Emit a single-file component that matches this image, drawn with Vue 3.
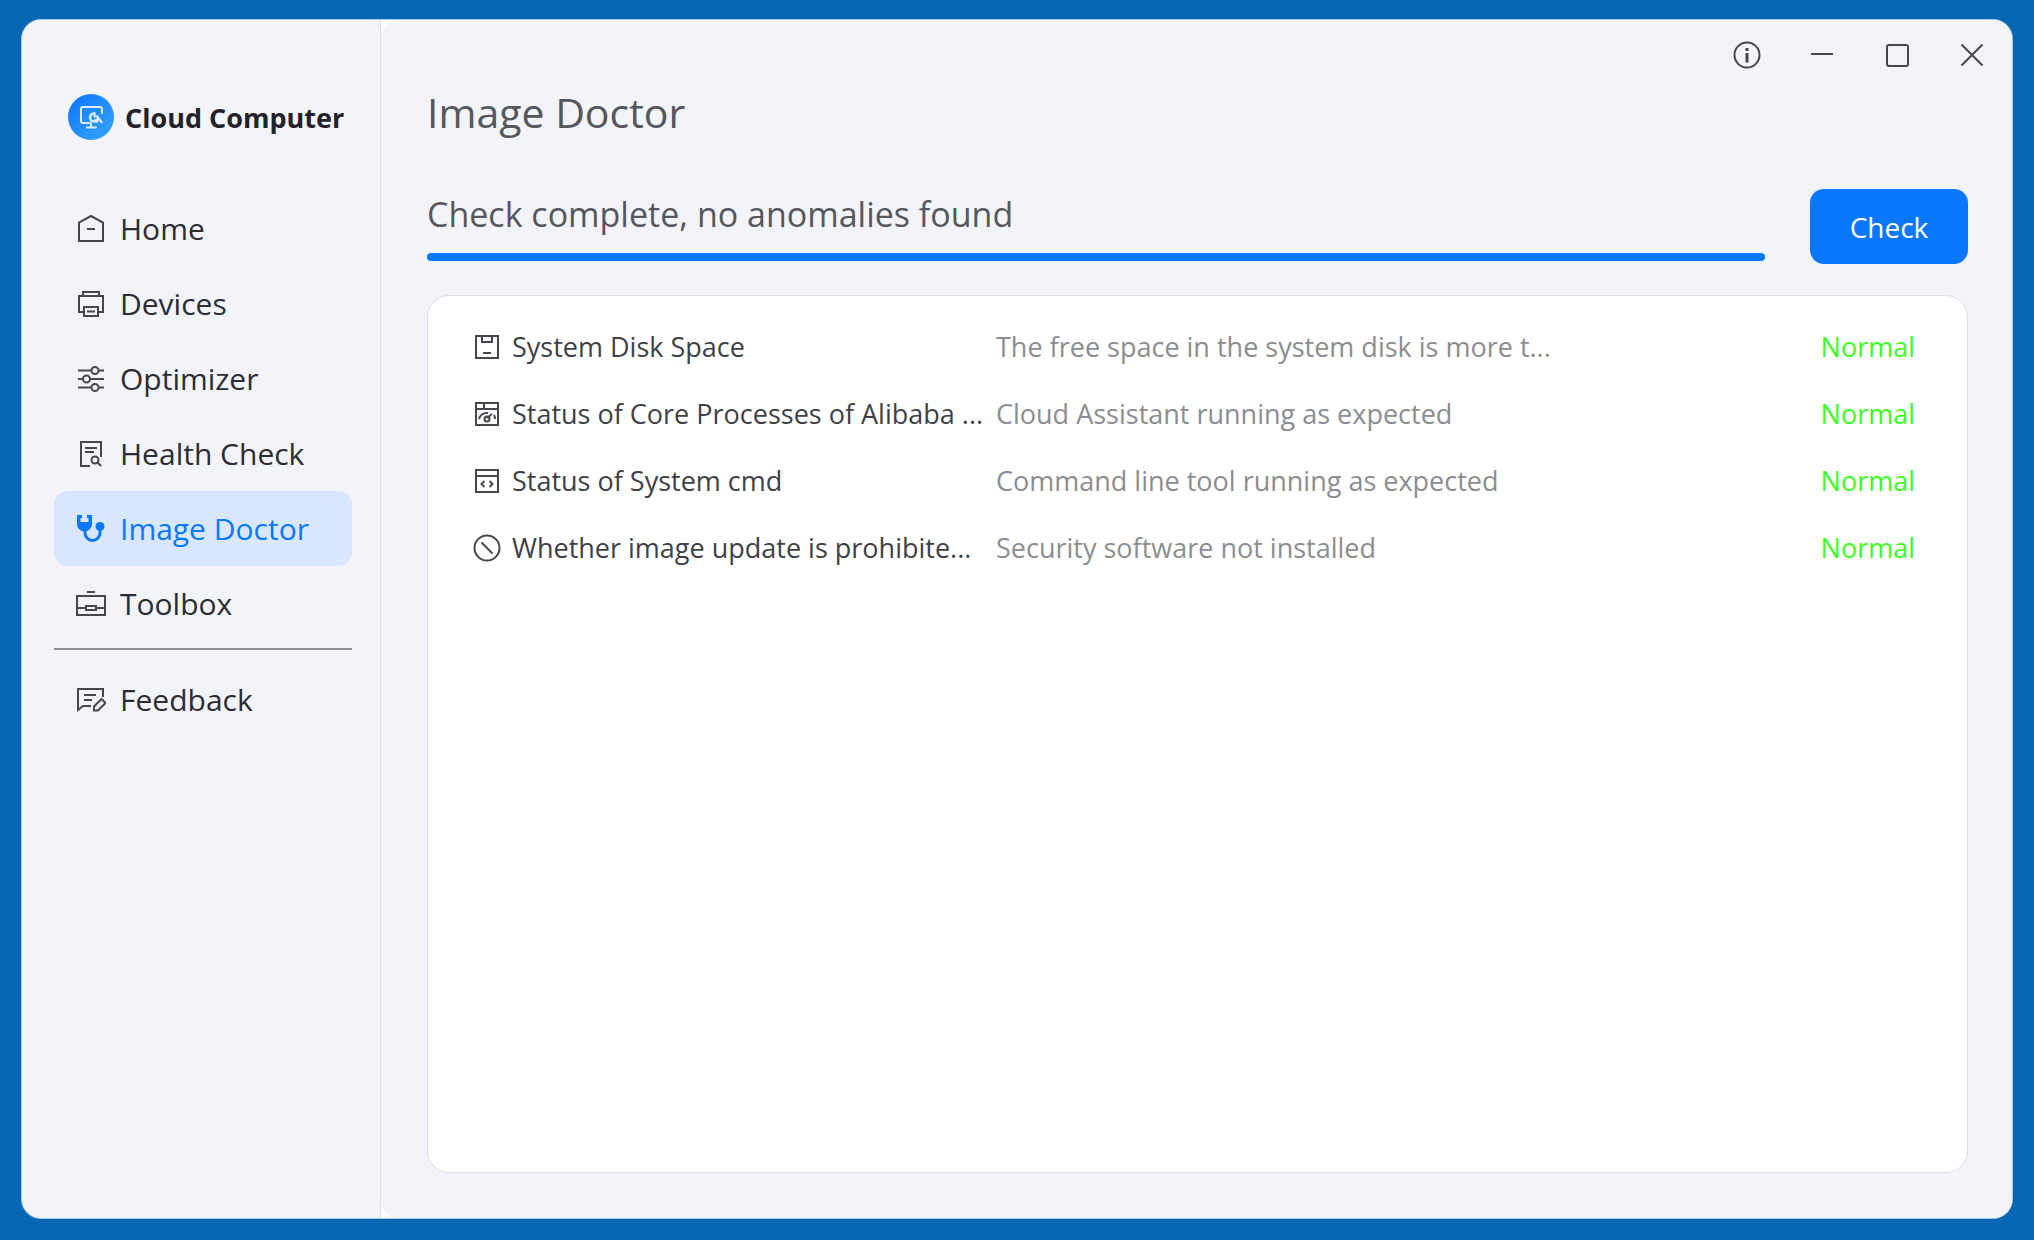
<script setup>
import { ref } from 'vue'

const active = ref('doctor')
const progress = ref(100)

const menu = [
  { id: 'home', label: 'Home' },
  { id: 'devices', label: 'Devices' },
  { id: 'optimizer', label: 'Optimizer' },
  { id: 'health', label: 'Health Check' },
  { id: 'doctor', label: 'Image Doctor' },
  { id: 'toolbox', label: 'Toolbox' },
  { id: 'feedback', label: 'Feedback' }
]

const checks = [
  {
    id: 'disk',
    name: 'System Disk Space',
    detail: 'The free space in the system disk is more t...',
    status: 'Normal'
  },
  {
    id: 'process',
    name: 'Status of Core Processes of Alibaba ...',
    detail: 'Cloud Assistant running as expected',
    status: 'Normal'
  },
  {
    id: 'cmd',
    name: 'Status of System cmd',
    detail: 'Command line tool running as expected',
    status: 'Normal'
  },
  {
    id: 'prohibit',
    name: 'Whether image update is prohibite...',
    detail: 'Security software not installed',
    status: 'Normal'
  }
]
</script>

<template>
  <div class="desktop">
    <div class="window">
      <aside class="sidebar">
        <div class="brand">
          <svg class="logo" viewBox="0 0 46 46" aria-hidden="true">
            <defs>
              <linearGradient id="logo-fill" x1="0" y1="0" x2="1" y2="1">
                <stop offset="0" stop-color="#0a74ff" />
                <stop offset="1" stop-color="#38a8ff" />
              </linearGradient>
            </defs>
            <circle cx="23" cy="23" r="23" fill="url(#logo-fill)" />
            <g fill="none" stroke="#dcecff" stroke-width="2" stroke-linecap="round">
              <path d="M22 29h-7a2 2 0 0 1-2-2V15a2 2 0 0 1 2-2h17a2 2 0 0 1 2 2v4" />
              <path d="M19 33.500h9M23 29.500v4" />
              <path d="M26.500 19.500a4 4 0 1 0 3.500 4.500l3.500 4" stroke-width="2.500" />
              <path d="M26.500 19.500v3h3M29 28l-2-2" />
            </g>
          </svg>
          <span>Cloud Computer</span>
        </div>

        <nav class="menu">
          <template v-for="item in menu" :key="item.id">
            <hr v-if="item.id === 'feedback'" class="divider" />
            <button
              type="button"
              class="menu-item"
              :class="{ active: active === item.id }"
              @click="active = item.id"
            >
              <svg class="icon" viewBox="0 0 30 30" aria-hidden="true">
                <template v-if="item.id === 'home'">
                  <path d="M3 27V8.500L15 2l12 6.500V27z" />
                  <path d="M11 15h8" />
                </template>
                <template v-else-if="item.id === 'devices'">
                  <path d="M7 7V3h16v4" />
                  <path d="M7 23H3V7h24v16h-4" />
                  <path d="M8 18h14v9H8z" />
                  <path d="M11 22.500h8" />
                </template>
                <template v-else-if="item.id === 'optimizer'">
                  <path d="M2 6.500h13.500M22.500 6.500H28M2 15h5M14 15h14M2 23.500h13.500M22.500 23.500H28" />
                  <circle cx="19" cy="6.500" r="3.500" />
                  <circle cx="10.500" cy="15" r="3.500" />
                  <circle cx="19" cy="23.500" r="3.500" />
                </template>
                <template v-else-if="item.id === 'health'">
                  <path d="M14 27H5V3h20v15" />
                  <path d="M9 9h12M9 13h9" />
                  <circle cx="19" cy="21" r="3.500" />
                  <path d="M21.500 23.500L25 27" />
                </template>
                <template v-else-if="item.id === 'doctor'">
                  <path class="solid" d="M1 1h5v3H4.500v4h8V4H11V1h5v9a7.500 7.500 0 0 1-15 0z" />
                  <circle class="solid" cx="24" cy="12.500" r="4.500" />
                  <path class="tube" d="M9 16v3a7.500 7.500 0 0 0 15 0v-5" />
                </template>
                <template v-else-if="item.id === 'toolbox'">
                  <path d="M1 7h28v19H1zM11 3h8" />
                  <path d="M1 19h9M20 19h9M10 17h10v4H10z" />
                </template>
                <template v-else>
                  <path d="M27 12V4H2v21l5-4h8" />
                  <path d="M8 10h12M8 15h8" />
                  <path d="M18 21.500l7.500-7.500 4 4-7.500 7.500h-4z" />
                </template>
              </svg>
              <span>{{ item.label }}</span>
            </button>
          </template>
        </nav>
      </aside>

      <div class="content">
        <main class="page">
          <div class="titlebar">
            <button type="button" aria-label="About">
              <svg viewBox="0 0 28 28" aria-hidden="true">
                <circle cx="14" cy="14" r="12.500" />
                <path class="info" d="M14 7v3M14 12v9.500" />
              </svg>
            </button>
            <button type="button" aria-label="Minimize">
              <svg viewBox="0 0 28 28" aria-hidden="true"><path d="M3 13h22" /></svg>
            </button>
            <button type="button" aria-label="Maximize">
              <svg viewBox="0 0 28 28" aria-hidden="true">
                <rect x="4" y="4" width="21" height="21" rx="2" />
              </svg>
            </button>
            <button type="button" aria-label="Close">
              <svg viewBox="0 0 28 28" aria-hidden="true">
                <path d="M3.500 3.500l21 21M24.500 3.500l-21 21" />
              </svg>
            </button>
          </div>

          <div class="body">
            <h1>Image Doctor</h1>

            <div class="summary">
              <div class="result">
                <p id="result-text">Check complete, no anomalies found</p>
                <div
                  class="track"
                  role="progressbar"
                  aria-labelledby="result-text"
                  :aria-valuenow="progress"
                >
                  <div class="bar" :style="{ width: progress + '%' }"></div>
                </div>
              </div>
              <button type="button" class="check">Check</button>
            </div>

            <section class="card">
              <table>
                <tbody>
                  <tr v-for="check in checks" :key="check.id">
                    <td class="mark">
                      <svg class="icon" viewBox="0 0 28 28" aria-hidden="true">
                        <template v-if="check.id === 'disk'">
                          <path d="M3 3h22v22H3z" />
                          <path d="M9 3v6h10V3M10 20h8" />
                        </template>
                        <template v-else-if="check.id === 'process'">
                          <path d="M3 3h22v22H3zM3 9h22M11 3v6" />
                          <path d="M6 19a8 8 0 0 1 9-6M19 14l-5 4M21 15a8 8 0 0 1 1 4" />
                          <circle cx="14" cy="19" r="2.500" />
                        </template>
                        <template v-else-if="check.id === 'cmd'">
                          <path d="M3 3h22v22H3zM3 9h22" />
                          <path d="M11.500 14l-3 3 3 3M16.500 14l3 3-3 3" />
                        </template>
                        <template v-else>
                          <circle cx="14" cy="14" r="12.500" />
                          <path d="M8.500 8.500l11 11" />
                        </template>
                      </svg>
                    </td>
                    <td class="name">{{ check.name }}</td>
                    <td class="detail">{{ check.detail }}</td>
                    <td class="status">{{ check.status }}</td>
                  </tr>
                </tbody>
              </table>
            </section>
          </div>
        </main>
      </div>
    </div>
  </div>
</template>

<style>
body {
  margin: 0;
  background: #0667b3;
}
</style>

<style scoped>
* {
  box-sizing: border-box;
}

.desktop {
  min-height: 100vh;
  padding: 19px 21px 21px;
  display: flex;
  background: #0667b3;
  color: #2b2d33;
  font-family: 'Open Sans', 'Noto Sans', sans-serif;
  font-size: 27px;
}

.window {
  flex: 1;
  display: flex;
  overflow: hidden;
  border: 1px solid #a9c9e4;
  border-radius: 20px;
  background: #f3f4f9;
}

button {
  border: none;
  background: none;
  color: inherit;
  font: inherit;
  cursor: pointer;
}

svg {
  display: block;
  fill: none;
  stroke: #45474c;
  stroke-width: 2;
}

.sidebar {
  width: 359px;
  flex: none;
  padding: 74px 28px 0 32px;
  border-right: 1px solid #dfe0e4;
}

.brand {
  display: flex;
  align-items: center;
  gap: 11px;
  height: 46px;
  padding-left: 14px;
  color: #222228;
  font-weight: 700;
  white-space: nowrap;
}

.logo {
  width: 46px;
  height: 46px;
  flex: none;
  stroke: none;
}

.menu {
  display: flex;
  flex-direction: column;
  margin-top: 51px;
}

.menu-item {
  display: flex;
  align-items: center;
  gap: 14px;
  height: 75px;
  padding: 0 22px;
  border-radius: 14px;
  font-size: 30px;
  white-space: nowrap;
}

.icon {
  width: 30px;
  height: 30px;
  flex: none;
}

.active {
  background: #d8e7fe;
  color: #0a77ff;
}

.active .icon {
  stroke: none;
}

.solid {
  fill: #0a77ff;
}

.tube {
  stroke: #0a77ff;
  stroke-width: 3;
}

.divider {
  width: 100%;
  height: 2px;
  margin: 7px 0 12px;
  border: none;
  background: #8e9095;
}

.content {
  flex: 1;
  display: flex;
  background: #fff;
}

.page {
  flex: 1;
  display: flex;
  flex-direction: column;
  border-radius: 18px;
  background: #f3f4f9;
}

.titlebar {
  display: flex;
  justify-content: flex-end;
  height: 70px;
  padding-right: 3px;
}

.titlebar button {
  display: flex;
  align-items: center;
  justify-content: center;
  width: 75px;
  padding: 0;
}

.titlebar svg {
  width: 28px;
  height: 28px;
}

.info {
  stroke-width: 3;
}

.body {
  flex: 1;
  display: flex;
  flex-direction: column;
  padding: 0 44px 45px 46px;
}

h1 {
  margin: 0;
  color: #55575d;
  font-size: 41px;
  font-weight: 400;
  line-height: 44px;
}

.summary {
  display: flex;
  gap: 45px;
  height: 75px;
  margin-top: 55px;
}

.result {
  flex: 1;
}

.result p {
  margin: 0;
  color: #55575d;
  font-size: 34px;
  line-height: 50px;
}

.track {
  height: 8px;
  margin-top: 14px;
  border-radius: 4px;
  background: #dfe3ec;
}

.bar {
  height: 8px;
  border-radius: 4px;
  background: #0a77ff;
}

.check {
  width: 158px;
  border-radius: 14px;
  background: #0a77ff;
  color: #fff;
  font-size: 28px;
}

.card {
  flex: 1;
  margin-top: 31px;
  padding: 17px 52px 17px 45px;
  border: 1px solid #dfe0e4;
  border-radius: 22px;
  background: #fff;
}

table {
  width: 100%;
  border-collapse: collapse;
}

td {
  height: 67px;
  padding: 0;
  white-space: nowrap;
}

.mark {
  width: 39px;
}

.mark .icon {
  width: 28px;
  height: 28px;
}

.name {
  width: 484px;
  color: #3f4146;
}

.detail {
  color: #8c8d90;
}

.status {
  color: #3cff1e;
  text-align: right;
}
</style>
